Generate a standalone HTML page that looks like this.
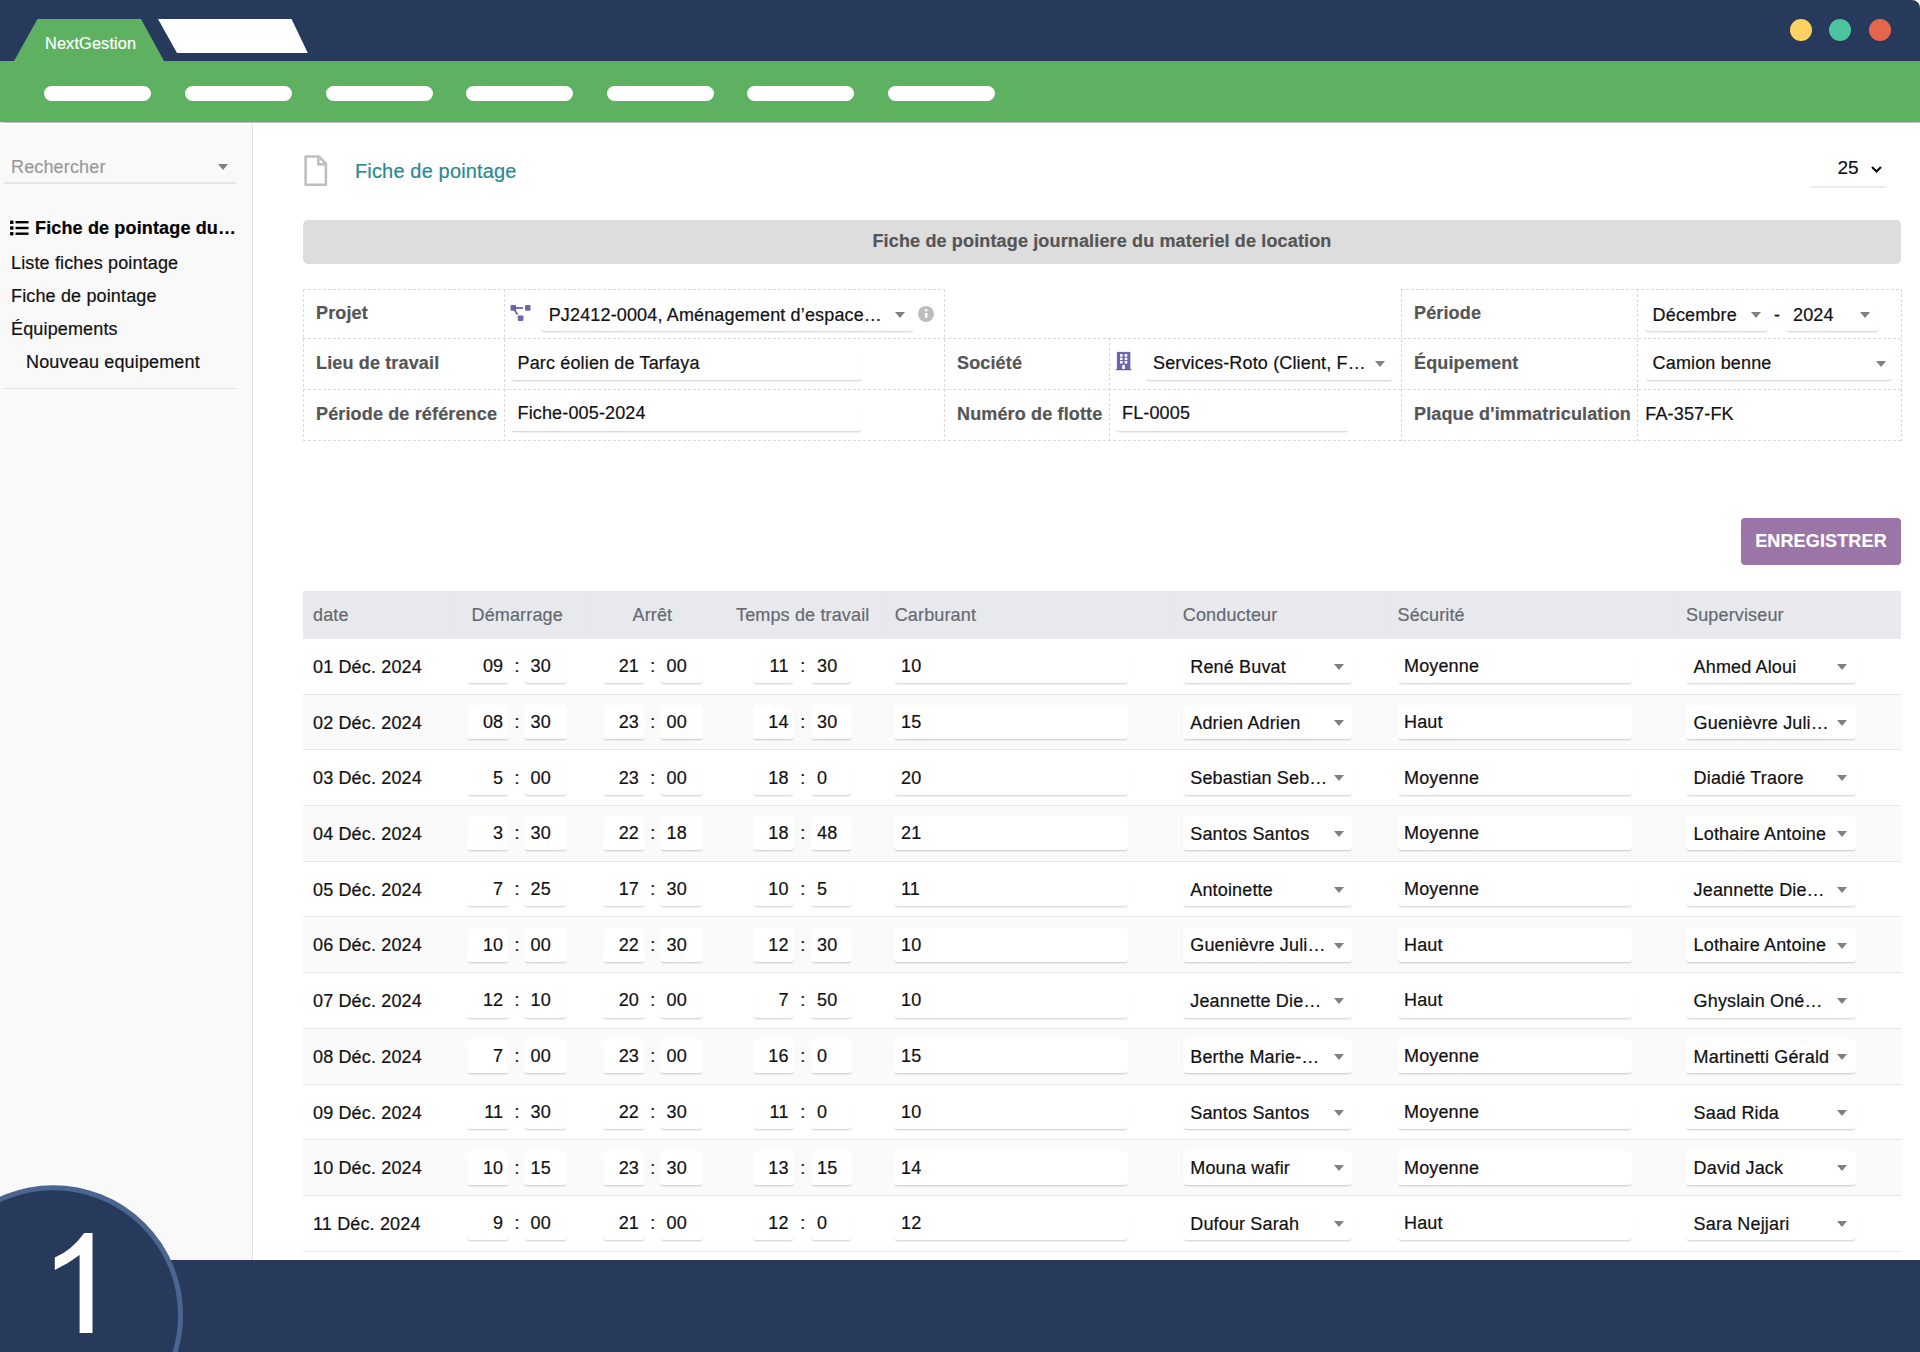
<!DOCTYPE html>
<html><head><meta charset="utf-8">
<style>
*{box-sizing:border-box;margin:0;padding:0}
html,body{width:1920px;height:1352px;overflow:hidden;background:#fff;font-family:"Liberation Sans",sans-serif;color:#111}
.abs{position:absolute}
#top{position:absolute;left:0;top:0;width:1920px;height:61px;background:#283a5b;border-top-right-radius:8px}
#green{position:absolute;left:0;top:61px;width:1920px;height:61px;background:#5eb160;box-shadow:0 0.5px 1px rgba(0,0,0,.25);z-index:2}
.pill{position:absolute;top:25px;width:107px;height:15px;border-radius:8px;background:#fff}
.dot{position:absolute;top:19px;width:22px;height:22px;border-radius:50%}
#side{position:absolute;left:0;top:124px;width:253px;height:1136px;background:#f9f9f9;border-right:1px solid #e3e3e3}
.sitem{position:absolute;left:11px;font-size:18px;white-space:nowrap;line-height:20px}
#bottom{position:absolute;left:0;top:1260px;width:1920px;height:92px;background:#283a5b}
.t{position:absolute;white-space:nowrap;line-height:20px;font-size:18px;letter-spacing:0.15px;-webkit-text-stroke:0.2px currentColor}
.tri{position:absolute;width:0;height:0;border-left:5px solid transparent;border-right:5px solid transparent;border-top:6px solid #777}
.ul{position:absolute;background:#fff;border-radius:4px;box-shadow:0 2px 2px -1.5px rgba(0,0,0,.2)}
</style></head><body>
<div id="top"></div>
<svg class="abs" style="left:0;top:0" width="400" height="61">
  <polygon points="14,61 37.5,19 141,19 164,61" fill="#5eb160"/>
  <polygon points="158,19 291.5,19 307.8,53 177,53" fill="#fff"/>
</svg>
<div class="t" style="left:45px;top:33.2px;font-size:16.3px;color:#fff">NextGestion</div>
<div class="dot" style="left:1790px;background:#fdd162"></div>
<div class="dot" style="left:1829px;background:#4cc49f"></div>
<div class="dot" style="left:1869px;background:#e4664f"></div>
<div id="green">
  <div class="pill" style="left:44px"></div>
  <div class="pill" style="left:185px"></div>
  <div class="pill" style="left:326px"></div>
  <div class="pill" style="left:466px"></div>
  <div class="pill" style="left:607px"></div>
  <div class="pill" style="left:747px"></div>
  <div class="pill" style="left:888px"></div>
</div>

<div id="side">
  <div class="t" style="left:11px;top:33px;color:#9a9a9a">Rechercher</div>
  <div class="tri" style="left:218px;top:40px;border-top-color:#808080"></div>
  <div class="abs" style="left:3px;top:58px;width:234px;height:2px;border-radius:2px;background:#e6e6e6"></div>
  <svg class="abs" style="left:10px;top:96px" width="19" height="16" viewBox="0 0 19 16">
    <rect x="0" y="0.5" width="3.5" height="3.5" rx="0.8" fill="#000"/>
    <rect x="0" y="6.2" width="3.5" height="3.5" rx="0.8" fill="#000"/>
    <rect x="0" y="11.9" width="3.5" height="3.5" rx="0.8" fill="#000"/>
    <rect x="5.5" y="1" width="13" height="2.4" fill="#000"/>
    <rect x="5.5" y="6.8" width="13" height="2.4" fill="#000"/>
    <rect x="5.5" y="12.5" width="13" height="2.4" fill="#000"/>
  </svg>
  <div class="t" style="left:35px;top:93.7px;font-weight:bold;color:#000">Fiche de pointage du…</div>
  <div class="t" style="left:11px;top:129.3px">Liste fiches pointage</div>
  <div class="t" style="left:11px;top:162px">Fiche de pointage</div>
  <div class="t" style="left:11px;top:195px">Équipements</div>
  <div class="t" style="left:26px;top:228px">Nouveau equipement</div>
  <div class="abs" style="left:3px;top:264px;width:234px;height:1px;background:#e4e4e4"></div>
</div>


<!-- page header -->
<svg class="abs" style="left:298px;top:150px" width="40" height="42" viewBox="0 0 40 42">
  <path d="M7.6 6.5 H20.9 L27.9 13.6 V34.8 H7.6 Z" fill="#fff" stroke="#bfbfbf" stroke-width="2.6" stroke-linejoin="round"/>
  <path d="M20.3 6.5 V14.4 H27.9" fill="none" stroke="#bfbfbf" stroke-width="2.6" stroke-linejoin="round"/>
</svg>
<div class="t" style="left:355px;top:159px;font-size:20px;line-height:24px;color:#2a8990">Fiche de pointage</div>
<div class="t" style="left:1837.5px;top:158px;font-size:19px;letter-spacing:0">25</div>
<svg class="abs" style="left:1869.7px;top:164.8px" width="13" height="9" viewBox="0 0 13 9"><path d="M2 2 L6.5 6.5 L11 2" fill="none" stroke="#111" stroke-width="2.2"/></svg>
<div class="abs" style="left:1809.5px;top:186px;width:77.5px;height:2px;border-radius:1px;background:#ebebeb"></div>
<div class="abs" style="left:303px;top:220px;width:1598px;height:44px;background:#dddddd;border-radius:5px"></div>
<div class="t" style="left:303px;width:1598px;text-align:center;top:231px;font-weight:bold;color:#555">Fiche de pointage journaliere du materiel de location</div>
<svg class="abs" style="left:0;top:0" width="1920" height="460"><line x1="303" y1="289.5" x2="945" y2="289.5" stroke="#dadada" stroke-width="1" stroke-dasharray="3 2"/><line x1="1401" y1="289.5" x2="1902" y2="289.5" stroke="#dadada" stroke-width="1" stroke-dasharray="3 2"/><line x1="303" y1="338.5" x2="1902" y2="338.5" stroke="#dadada" stroke-width="1" stroke-dasharray="3 2"/><line x1="303" y1="389.5" x2="1902" y2="389.5" stroke="#dadada" stroke-width="1" stroke-dasharray="3 2"/><line x1="303" y1="440.5" x2="1902" y2="440.5" stroke="#dadada" stroke-width="1" stroke-dasharray="3 2"/><line x1="303.5" y1="289" x2="303.5" y2="441" stroke="#dadada" stroke-width="1" stroke-dasharray="3 2"/><line x1="504.5" y1="289" x2="504.5" y2="441" stroke="#dadada" stroke-width="1" stroke-dasharray="3 2"/><line x1="944.5" y1="289" x2="944.5" y2="441" stroke="#dadada" stroke-width="1" stroke-dasharray="3 2"/><line x1="1401.5" y1="289" x2="1401.5" y2="441" stroke="#dadada" stroke-width="1" stroke-dasharray="3 2"/><line x1="1637.5" y1="289" x2="1637.5" y2="441" stroke="#dadada" stroke-width="1" stroke-dasharray="3 2"/><line x1="1901.5" y1="289" x2="1901.5" y2="441" stroke="#dadada" stroke-width="1" stroke-dasharray="3 2"/><line x1="1109.5" y1="338" x2="1109.5" y2="441" stroke="#dadada" stroke-width="1" stroke-dasharray="3 2"/></svg><div class="t" style="left:316px;top:303.26px;font-size:18px;line-height:20px;font-weight:bold;color:#555;">Projet</div><svg class="abs" style="left:505px;top:298px" width="35" height="30" viewBox="0 0 35 30">
<rect x="5.5" y="6.9" width="5.6" height="5.75" rx="0.8" fill="#6a67ae"/>
<rect x="20" y="6.9" width="5.5" height="5.75" rx="0.8" fill="#6a67ae"/>
<rect x="12.8" y="17.5" width="5.6" height="5.4" rx="0.8" fill="#6a67ae"/>
<line x1="10" y1="10" x2="18" y2="10" stroke="#5f5c9e" stroke-width="1.7"/>
<line x1="9.6" y1="12" x2="12.2" y2="16" stroke="#5f5c9e" stroke-width="1.6" stroke-linecap="round"/>
</svg><div class="ul" style="left:540.6px;top:297px;width:373.4px;height:34px"></div><div class="t" style="left:548.7px;top:304.76px;font-size:18px;line-height:20px;font-weight:normal;color:#111;">PJ2412-0004, Aménagement d’espace…</div><div class="tri" style="left:895px;top:312px;border-top-color:#808080"></div><svg class="abs" style="left:918px;top:306px" width="16" height="16" viewBox="0 0 16 16"><circle cx="8" cy="8" r="8" fill="#bdbdbd"/><circle cx="8.1" cy="4.2" r="1.3" fill="#fff"/><path d="M6.6 6.9 H9.5 V11.8 H6.6 V11.2 H7.1 V7.6 H6.6 Z" fill="#fff"/></svg><div class="t" style="left:1414px;top:303.26px;font-size:18px;line-height:20px;font-weight:bold;color:#555;">Période</div><div class="ul" style="left:1644.6px;top:297px;width:123.40000000000009px;height:34px"></div><div class="t" style="left:1652.6px;top:304.76px;font-size:18px;line-height:20px;font-weight:normal;color:#111;">Décembre</div><div class="tri" style="left:1751px;top:312px;border-top-color:#808080"></div><div class="t" style="left:1774px;top:304.76px;font-size:18px;line-height:20px;font-weight:normal;color:#111;">-</div><div class="ul" style="left:1786px;top:297px;width:93px;height:34px"></div><div class="t" style="left:1793px;top:304.76px;font-size:18px;line-height:20px;font-weight:normal;color:#111;">2024</div><div class="tri" style="left:1860px;top:312px;border-top-color:#808080"></div><div class="t" style="left:316px;top:353.26px;font-size:18px;line-height:20px;font-weight:bold;color:#555;">Lieu de travail</div><div class="ul" style="left:511px;top:346px;width:351px;height:34px"></div><div class="t" style="left:517.5px;top:352.76px;font-size:18px;line-height:20px;font-weight:normal;color:#111;">Parc éolien de Tarfaya</div><div class="t" style="left:957px;top:353.26px;font-size:18px;line-height:20px;font-weight:bold;color:#555;">Société</div><svg class="abs" style="left:1110px;top:345px" width="30" height="30" viewBox="0 0 30 30">
<rect x="6.9" y="6.9" width="13.5" height="17.6" fill="#6a67ae"/>
<rect x="6" y="24" width="15.3" height="1.2" fill="#5f5c9e"/>
<g fill="#fff"><rect x="10" y="9.1" width="2.6" height="2.6"/><rect x="14.6" y="9.1" width="2.7" height="2.6"/>
<rect x="10" y="12.7" width="2.6" height="2.4"/><rect x="14.6" y="12.7" width="2.7" height="2.4"/>
<rect x="10" y="16" width="2.6" height="2.6"/><rect x="14.6" y="16" width="2.7" height="2.6"/>
<path d="M12.2 24 V21 A1.35 1.35 0 0 1 14.9 21 V24 Z"/></g>
</svg><div class="ul" style="left:1146px;top:346px;width:247px;height:34px"></div><div class="t" style="left:1153px;top:353.26px;font-size:18px;line-height:20px;font-weight:normal;color:#111;">Services-Roto (Client, F…</div><div class="tri" style="left:1375px;top:361px;border-top-color:#808080"></div><div class="t" style="left:1414px;top:353.26px;font-size:18px;line-height:20px;font-weight:bold;color:#555;">Équipement</div><div class="ul" style="left:1644.6px;top:346px;width:247.9000000000001px;height:34px"></div><div class="t" style="left:1652.6px;top:353.06px;font-size:18px;line-height:20px;font-weight:normal;color:#111;">Camion benne</div><div class="tri" style="left:1876px;top:361px;border-top-color:#808080"></div><div class="t" style="left:316px;top:404.26px;font-size:18px;line-height:20px;font-weight:bold;color:#555;">Période de référence</div><div class="ul" style="left:511px;top:396.6px;width:351px;height:34px"></div><div class="t" style="left:517.5px;top:402.56px;font-size:18px;line-height:20px;font-weight:normal;color:#111;">Fiche-005-2024</div><div class="t" style="left:957px;top:404.26px;font-size:18px;line-height:20px;font-weight:bold;color:#555;">Numéro de flotte</div><div class="ul" style="left:1116px;top:396.6px;width:233px;height:34px"></div><div class="t" style="left:1122px;top:402.56px;font-size:18px;line-height:20px;font-weight:normal;color:#111;">FL-0005</div><div class="t" style="left:1414px;top:404.26px;font-size:18px;line-height:20px;font-weight:bold;color:#555;">Plaque d'immatriculation</div><div class="t" style="left:1645.3px;top:404.46px;font-size:18px;line-height:20px;font-weight:normal;color:#111;">FA-357-FK</div><div class="abs" style="left:1741px;top:518px;width:160px;height:47px;border-radius:4px;background:#9b74a8"></div><div class="t" style="left:1741px;top:531.26px;font-size:18px;line-height:20px;font-weight:bold;color:#fff;width:160px;text-align:center;">ENREGISTRER</div><div class="abs" style="left:303px;top:591px;width:1598px;height:48px;background:#e8e9ec"></div><div class="abs" style="left:450px;top:591px;width:1px;height:48px;background:#e4e5e8"></div><div class="abs" style="left:585px;top:591px;width:1px;height:48px;background:#e4e5e8"></div><div class="abs" style="left:883px;top:591px;width:1px;height:48px;background:#e4e5e8"></div><div class="abs" style="left:1173px;top:591px;width:1px;height:48px;background:#e4e5e8"></div><div class="abs" style="left:1387px;top:591px;width:1px;height:48px;background:#e4e5e8"></div><div class="abs" style="left:1675px;top:591px;width:1px;height:48px;background:#e4e5e8"></div><div class="t" style="left:313px;top:604.76px;font-size:18px;line-height:20px;font-weight:normal;color:#666a72;">date</div><div class="t" style="left:471.5px;top:604.76px;font-size:18px;line-height:20px;font-weight:normal;color:#666a72;">Démarrage</div><div class="t" style="left:632.5px;top:604.76px;font-size:18px;line-height:20px;font-weight:normal;color:#666a72;">Arrêt</div><div class="t" style="left:736px;top:604.76px;font-size:18px;line-height:20px;font-weight:normal;color:#666a72;">Temps de travail</div><div class="t" style="left:894.7px;top:604.76px;font-size:18px;line-height:20px;font-weight:normal;color:#666a72;">Carburant</div><div class="t" style="left:1182.8px;top:604.76px;font-size:18px;line-height:20px;font-weight:normal;color:#666a72;">Conducteur</div><div class="t" style="left:1397.5px;top:604.76px;font-size:18px;line-height:20px;font-weight:normal;color:#666a72;">Sécurité</div><div class="t" style="left:1686px;top:604.76px;font-size:18px;line-height:20px;font-weight:normal;color:#666a72;">Superviseur</div><div class="abs" style="left:303px;top:639.00px;width:1598px;height:55.70px;background:#fff;border-bottom:1px solid #e6e6e6"></div><div class="t" style="left:313px;top:656.96px;font-size:18px;line-height:20px;font-weight:normal;color:#111;">01 Déc. 2024</div><div class="ul" style="left:466.7px;top:649.3px;width:42.400000000000034px;height:34px"></div><div class="ul" style="left:524px;top:649.3px;width:43.200000000000045px;height:34px"></div><div class="t" style="left:466.7px;width:36.6px;text-align:right;top:656.26px">09</div><div class="t" style="left:530.6px;top:656.26px;font-size:18px;line-height:20px;font-weight:normal;color:#111;">30</div><div class="t" style="left:514.6px;top:656.26px;font-size:18px;line-height:20px;font-weight:normal;color:#111;">:</div><div class="ul" style="left:603.4px;top:649.3px;width:41.39999999999998px;height:34px"></div><div class="ul" style="left:660px;top:649.3px;width:42.700000000000045px;height:34px"></div><div class="t" style="left:603.4px;width:35.6px;text-align:right;top:656.26px">21</div><div class="t" style="left:666.6px;top:656.26px;font-size:18px;line-height:20px;font-weight:normal;color:#111;">00</div><div class="t" style="left:650.3px;top:656.26px;font-size:18px;line-height:20px;font-weight:normal;color:#111;">:</div><div class="ul" style="left:752.7px;top:649.3px;width:41.69999999999993px;height:34px"></div><div class="ul" style="left:810.5px;top:649.3px;width:41.700000000000045px;height:34px"></div><div class="t" style="left:752.7px;width:35.9px;text-align:right;top:656.26px">11</div><div class="t" style="left:817.1px;top:656.26px;font-size:18px;line-height:20px;font-weight:normal;color:#111;">30</div><div class="t" style="left:800.3px;top:656.26px;font-size:18px;line-height:20px;font-weight:normal;color:#111;">:</div><div class="ul" style="left:894.2px;top:649.3px;width:233.5999999999999px;height:34px"></div><div class="t" style="left:901px;top:656.26px;font-size:18px;line-height:20px;font-weight:normal;color:#111;">10</div><div class="ul" style="left:1182.8px;top:649.3px;width:169.5px;height:34px"></div><div class="t" style="left:1190.3px;top:656.96px;font-size:18px;line-height:20px;font-weight:normal;color:#111;">René Buvat</div><div class="tri" style="left:1334px;top:664.0px;border-top-color:#808080"></div><div class="ul" style="left:1398px;top:649.3px;width:233.5px;height:34px"></div><div class="t" style="left:1404px;top:656.26px;font-size:18px;line-height:20px;font-weight:normal;color:#111;">Moyenne</div><div class="ul" style="left:1686.4px;top:649.3px;width:169.5px;height:34px"></div><div class="t" style="left:1693.6px;top:656.96px;font-size:18px;line-height:20px;font-weight:normal;color:#111;">Ahmed Aloui</div><div class="tri" style="left:1837px;top:664.0px;border-top-color:#808080"></div><div class="abs" style="left:303px;top:694.70px;width:1598px;height:55.70px;background:#fafafa;border-bottom:1px solid #e6e6e6"></div><div class="t" style="left:313px;top:712.66px;font-size:18px;line-height:20px;font-weight:normal;color:#111;">02 Déc. 2024</div><div class="ul" style="left:466.7px;top:705.0px;width:42.400000000000034px;height:34px"></div><div class="ul" style="left:524px;top:705.0px;width:43.200000000000045px;height:34px"></div><div class="t" style="left:466.7px;width:36.6px;text-align:right;top:711.96px">08</div><div class="t" style="left:530.6px;top:711.96px;font-size:18px;line-height:20px;font-weight:normal;color:#111;">30</div><div class="t" style="left:514.6px;top:711.96px;font-size:18px;line-height:20px;font-weight:normal;color:#111;">:</div><div class="ul" style="left:603.4px;top:705.0px;width:41.39999999999998px;height:34px"></div><div class="ul" style="left:660px;top:705.0px;width:42.700000000000045px;height:34px"></div><div class="t" style="left:603.4px;width:35.6px;text-align:right;top:711.96px">23</div><div class="t" style="left:666.6px;top:711.96px;font-size:18px;line-height:20px;font-weight:normal;color:#111;">00</div><div class="t" style="left:650.3px;top:711.96px;font-size:18px;line-height:20px;font-weight:normal;color:#111;">:</div><div class="ul" style="left:752.7px;top:705.0px;width:41.69999999999993px;height:34px"></div><div class="ul" style="left:810.5px;top:705.0px;width:41.700000000000045px;height:34px"></div><div class="t" style="left:752.7px;width:35.9px;text-align:right;top:711.96px">14</div><div class="t" style="left:817.1px;top:711.96px;font-size:18px;line-height:20px;font-weight:normal;color:#111;">30</div><div class="t" style="left:800.3px;top:711.96px;font-size:18px;line-height:20px;font-weight:normal;color:#111;">:</div><div class="ul" style="left:894.2px;top:705.0px;width:233.5999999999999px;height:34px"></div><div class="t" style="left:901px;top:711.96px;font-size:18px;line-height:20px;font-weight:normal;color:#111;">15</div><div class="ul" style="left:1182.8px;top:705.0px;width:169.5px;height:34px"></div><div class="t" style="left:1190.3px;top:712.66px;font-size:18px;line-height:20px;font-weight:normal;color:#111;">Adrien Adrien</div><div class="tri" style="left:1334px;top:719.7px;border-top-color:#808080"></div><div class="ul" style="left:1398px;top:705.0px;width:233.5px;height:34px"></div><div class="t" style="left:1404px;top:711.96px;font-size:18px;line-height:20px;font-weight:normal;color:#111;">Haut</div><div class="ul" style="left:1686.4px;top:705.0px;width:169.5px;height:34px"></div><div class="t" style="left:1693.6px;top:712.66px;font-size:18px;line-height:20px;font-weight:normal;color:#111;">Guenièvre Juli…</div><div class="tri" style="left:1837px;top:719.7px;border-top-color:#808080"></div><div class="abs" style="left:303px;top:750.40px;width:1598px;height:55.70px;background:#fff;border-bottom:1px solid #e6e6e6"></div><div class="t" style="left:313px;top:768.36px;font-size:18px;line-height:20px;font-weight:normal;color:#111;">03 Déc. 2024</div><div class="ul" style="left:466.7px;top:760.6999999999999px;width:42.400000000000034px;height:34px"></div><div class="ul" style="left:524px;top:760.6999999999999px;width:43.200000000000045px;height:34px"></div><div class="t" style="left:466.7px;width:36.6px;text-align:right;top:767.66px">5</div><div class="t" style="left:530.6px;top:767.66px;font-size:18px;line-height:20px;font-weight:normal;color:#111;">00</div><div class="t" style="left:514.6px;top:767.66px;font-size:18px;line-height:20px;font-weight:normal;color:#111;">:</div><div class="ul" style="left:603.4px;top:760.6999999999999px;width:41.39999999999998px;height:34px"></div><div class="ul" style="left:660px;top:760.6999999999999px;width:42.700000000000045px;height:34px"></div><div class="t" style="left:603.4px;width:35.6px;text-align:right;top:767.66px">23</div><div class="t" style="left:666.6px;top:767.66px;font-size:18px;line-height:20px;font-weight:normal;color:#111;">00</div><div class="t" style="left:650.3px;top:767.66px;font-size:18px;line-height:20px;font-weight:normal;color:#111;">:</div><div class="ul" style="left:752.7px;top:760.6999999999999px;width:41.69999999999993px;height:34px"></div><div class="ul" style="left:810.5px;top:760.6999999999999px;width:41.700000000000045px;height:34px"></div><div class="t" style="left:752.7px;width:35.9px;text-align:right;top:767.66px">18</div><div class="t" style="left:817.1px;top:767.66px;font-size:18px;line-height:20px;font-weight:normal;color:#111;">0</div><div class="t" style="left:800.3px;top:767.66px;font-size:18px;line-height:20px;font-weight:normal;color:#111;">:</div><div class="ul" style="left:894.2px;top:760.6999999999999px;width:233.5999999999999px;height:34px"></div><div class="t" style="left:901px;top:767.66px;font-size:18px;line-height:20px;font-weight:normal;color:#111;">20</div><div class="ul" style="left:1182.8px;top:760.6999999999999px;width:169.5px;height:34px"></div><div class="t" style="left:1190.3px;top:768.36px;font-size:18px;line-height:20px;font-weight:normal;color:#111;">Sebastian Seb…</div><div class="tri" style="left:1334px;top:775.4px;border-top-color:#808080"></div><div class="ul" style="left:1398px;top:760.6999999999999px;width:233.5px;height:34px"></div><div class="t" style="left:1404px;top:767.66px;font-size:18px;line-height:20px;font-weight:normal;color:#111;">Moyenne</div><div class="ul" style="left:1686.4px;top:760.6999999999999px;width:169.5px;height:34px"></div><div class="t" style="left:1693.6px;top:768.36px;font-size:18px;line-height:20px;font-weight:normal;color:#111;">Diadié Traore</div><div class="tri" style="left:1837px;top:775.4px;border-top-color:#808080"></div><div class="abs" style="left:303px;top:806.10px;width:1598px;height:55.70px;background:#fafafa;border-bottom:1px solid #e6e6e6"></div><div class="t" style="left:313px;top:824.06px;font-size:18px;line-height:20px;font-weight:normal;color:#111;">04 Déc. 2024</div><div class="ul" style="left:466.7px;top:816.4px;width:42.400000000000034px;height:34px"></div><div class="ul" style="left:524px;top:816.4px;width:43.200000000000045px;height:34px"></div><div class="t" style="left:466.7px;width:36.6px;text-align:right;top:823.36px">3</div><div class="t" style="left:530.6px;top:823.36px;font-size:18px;line-height:20px;font-weight:normal;color:#111;">30</div><div class="t" style="left:514.6px;top:823.36px;font-size:18px;line-height:20px;font-weight:normal;color:#111;">:</div><div class="ul" style="left:603.4px;top:816.4px;width:41.39999999999998px;height:34px"></div><div class="ul" style="left:660px;top:816.4px;width:42.700000000000045px;height:34px"></div><div class="t" style="left:603.4px;width:35.6px;text-align:right;top:823.36px">22</div><div class="t" style="left:666.6px;top:823.36px;font-size:18px;line-height:20px;font-weight:normal;color:#111;">18</div><div class="t" style="left:650.3px;top:823.36px;font-size:18px;line-height:20px;font-weight:normal;color:#111;">:</div><div class="ul" style="left:752.7px;top:816.4px;width:41.69999999999993px;height:34px"></div><div class="ul" style="left:810.5px;top:816.4px;width:41.700000000000045px;height:34px"></div><div class="t" style="left:752.7px;width:35.9px;text-align:right;top:823.36px">18</div><div class="t" style="left:817.1px;top:823.36px;font-size:18px;line-height:20px;font-weight:normal;color:#111;">48</div><div class="t" style="left:800.3px;top:823.36px;font-size:18px;line-height:20px;font-weight:normal;color:#111;">:</div><div class="ul" style="left:894.2px;top:816.4px;width:233.5999999999999px;height:34px"></div><div class="t" style="left:901px;top:823.36px;font-size:18px;line-height:20px;font-weight:normal;color:#111;">21</div><div class="ul" style="left:1182.8px;top:816.4px;width:169.5px;height:34px"></div><div class="t" style="left:1190.3px;top:824.06px;font-size:18px;line-height:20px;font-weight:normal;color:#111;">Santos Santos</div><div class="tri" style="left:1334px;top:831.1px;border-top-color:#808080"></div><div class="ul" style="left:1398px;top:816.4px;width:233.5px;height:34px"></div><div class="t" style="left:1404px;top:823.36px;font-size:18px;line-height:20px;font-weight:normal;color:#111;">Moyenne</div><div class="ul" style="left:1686.4px;top:816.4px;width:169.5px;height:34px"></div><div class="t" style="left:1693.6px;top:824.06px;font-size:18px;line-height:20px;font-weight:normal;color:#111;">Lothaire Antoine</div><div class="tri" style="left:1837px;top:831.1px;border-top-color:#808080"></div><div class="abs" style="left:303px;top:861.80px;width:1598px;height:55.70px;background:#fff;border-bottom:1px solid #e6e6e6"></div><div class="t" style="left:313px;top:879.76px;font-size:18px;line-height:20px;font-weight:normal;color:#111;">05 Déc. 2024</div><div class="ul" style="left:466.7px;top:872.0999999999999px;width:42.400000000000034px;height:34px"></div><div class="ul" style="left:524px;top:872.0999999999999px;width:43.200000000000045px;height:34px"></div><div class="t" style="left:466.7px;width:36.6px;text-align:right;top:879.06px">7</div><div class="t" style="left:530.6px;top:879.06px;font-size:18px;line-height:20px;font-weight:normal;color:#111;">25</div><div class="t" style="left:514.6px;top:879.06px;font-size:18px;line-height:20px;font-weight:normal;color:#111;">:</div><div class="ul" style="left:603.4px;top:872.0999999999999px;width:41.39999999999998px;height:34px"></div><div class="ul" style="left:660px;top:872.0999999999999px;width:42.700000000000045px;height:34px"></div><div class="t" style="left:603.4px;width:35.6px;text-align:right;top:879.06px">17</div><div class="t" style="left:666.6px;top:879.06px;font-size:18px;line-height:20px;font-weight:normal;color:#111;">30</div><div class="t" style="left:650.3px;top:879.06px;font-size:18px;line-height:20px;font-weight:normal;color:#111;">:</div><div class="ul" style="left:752.7px;top:872.0999999999999px;width:41.69999999999993px;height:34px"></div><div class="ul" style="left:810.5px;top:872.0999999999999px;width:41.700000000000045px;height:34px"></div><div class="t" style="left:752.7px;width:35.9px;text-align:right;top:879.06px">10</div><div class="t" style="left:817.1px;top:879.06px;font-size:18px;line-height:20px;font-weight:normal;color:#111;">5</div><div class="t" style="left:800.3px;top:879.06px;font-size:18px;line-height:20px;font-weight:normal;color:#111;">:</div><div class="ul" style="left:894.2px;top:872.0999999999999px;width:233.5999999999999px;height:34px"></div><div class="t" style="left:901px;top:879.06px;font-size:18px;line-height:20px;font-weight:normal;color:#111;">11</div><div class="ul" style="left:1182.8px;top:872.0999999999999px;width:169.5px;height:34px"></div><div class="t" style="left:1190.3px;top:879.76px;font-size:18px;line-height:20px;font-weight:normal;color:#111;">Antoinette</div><div class="tri" style="left:1334px;top:886.8px;border-top-color:#808080"></div><div class="ul" style="left:1398px;top:872.0999999999999px;width:233.5px;height:34px"></div><div class="t" style="left:1404px;top:879.06px;font-size:18px;line-height:20px;font-weight:normal;color:#111;">Moyenne</div><div class="ul" style="left:1686.4px;top:872.0999999999999px;width:169.5px;height:34px"></div><div class="t" style="left:1693.6px;top:879.76px;font-size:18px;line-height:20px;font-weight:normal;color:#111;">Jeannette Die…</div><div class="tri" style="left:1837px;top:886.8px;border-top-color:#808080"></div><div class="abs" style="left:303px;top:917.50px;width:1598px;height:55.70px;background:#fafafa;border-bottom:1px solid #e6e6e6"></div><div class="t" style="left:313px;top:935.46px;font-size:18px;line-height:20px;font-weight:normal;color:#111;">06 Déc. 2024</div><div class="ul" style="left:466.7px;top:927.8px;width:42.400000000000034px;height:34px"></div><div class="ul" style="left:524px;top:927.8px;width:43.200000000000045px;height:34px"></div><div class="t" style="left:466.7px;width:36.6px;text-align:right;top:934.76px">10</div><div class="t" style="left:530.6px;top:934.76px;font-size:18px;line-height:20px;font-weight:normal;color:#111;">00</div><div class="t" style="left:514.6px;top:934.76px;font-size:18px;line-height:20px;font-weight:normal;color:#111;">:</div><div class="ul" style="left:603.4px;top:927.8px;width:41.39999999999998px;height:34px"></div><div class="ul" style="left:660px;top:927.8px;width:42.700000000000045px;height:34px"></div><div class="t" style="left:603.4px;width:35.6px;text-align:right;top:934.76px">22</div><div class="t" style="left:666.6px;top:934.76px;font-size:18px;line-height:20px;font-weight:normal;color:#111;">30</div><div class="t" style="left:650.3px;top:934.76px;font-size:18px;line-height:20px;font-weight:normal;color:#111;">:</div><div class="ul" style="left:752.7px;top:927.8px;width:41.69999999999993px;height:34px"></div><div class="ul" style="left:810.5px;top:927.8px;width:41.700000000000045px;height:34px"></div><div class="t" style="left:752.7px;width:35.9px;text-align:right;top:934.76px">12</div><div class="t" style="left:817.1px;top:934.76px;font-size:18px;line-height:20px;font-weight:normal;color:#111;">30</div><div class="t" style="left:800.3px;top:934.76px;font-size:18px;line-height:20px;font-weight:normal;color:#111;">:</div><div class="ul" style="left:894.2px;top:927.8px;width:233.5999999999999px;height:34px"></div><div class="t" style="left:901px;top:934.76px;font-size:18px;line-height:20px;font-weight:normal;color:#111;">10</div><div class="ul" style="left:1182.8px;top:927.8px;width:169.5px;height:34px"></div><div class="t" style="left:1190.3px;top:935.46px;font-size:18px;line-height:20px;font-weight:normal;color:#111;">Guenièvre Juli…</div><div class="tri" style="left:1334px;top:942.5px;border-top-color:#808080"></div><div class="ul" style="left:1398px;top:927.8px;width:233.5px;height:34px"></div><div class="t" style="left:1404px;top:934.76px;font-size:18px;line-height:20px;font-weight:normal;color:#111;">Haut</div><div class="ul" style="left:1686.4px;top:927.8px;width:169.5px;height:34px"></div><div class="t" style="left:1693.6px;top:935.46px;font-size:18px;line-height:20px;font-weight:normal;color:#111;">Lothaire Antoine</div><div class="tri" style="left:1837px;top:942.5px;border-top-color:#808080"></div><div class="abs" style="left:303px;top:973.20px;width:1598px;height:55.70px;background:#fff;border-bottom:1px solid #e6e6e6"></div><div class="t" style="left:313px;top:991.16px;font-size:18px;line-height:20px;font-weight:normal;color:#111;">07 Déc. 2024</div><div class="ul" style="left:466.7px;top:983.5px;width:42.400000000000034px;height:34px"></div><div class="ul" style="left:524px;top:983.5px;width:43.200000000000045px;height:34px"></div><div class="t" style="left:466.7px;width:36.6px;text-align:right;top:990.46px">12</div><div class="t" style="left:530.6px;top:990.46px;font-size:18px;line-height:20px;font-weight:normal;color:#111;">10</div><div class="t" style="left:514.6px;top:990.46px;font-size:18px;line-height:20px;font-weight:normal;color:#111;">:</div><div class="ul" style="left:603.4px;top:983.5px;width:41.39999999999998px;height:34px"></div><div class="ul" style="left:660px;top:983.5px;width:42.700000000000045px;height:34px"></div><div class="t" style="left:603.4px;width:35.6px;text-align:right;top:990.46px">20</div><div class="t" style="left:666.6px;top:990.46px;font-size:18px;line-height:20px;font-weight:normal;color:#111;">00</div><div class="t" style="left:650.3px;top:990.46px;font-size:18px;line-height:20px;font-weight:normal;color:#111;">:</div><div class="ul" style="left:752.7px;top:983.5px;width:41.69999999999993px;height:34px"></div><div class="ul" style="left:810.5px;top:983.5px;width:41.700000000000045px;height:34px"></div><div class="t" style="left:752.7px;width:35.9px;text-align:right;top:990.46px">7</div><div class="t" style="left:817.1px;top:990.46px;font-size:18px;line-height:20px;font-weight:normal;color:#111;">50</div><div class="t" style="left:800.3px;top:990.46px;font-size:18px;line-height:20px;font-weight:normal;color:#111;">:</div><div class="ul" style="left:894.2px;top:983.5px;width:233.5999999999999px;height:34px"></div><div class="t" style="left:901px;top:990.46px;font-size:18px;line-height:20px;font-weight:normal;color:#111;">10</div><div class="ul" style="left:1182.8px;top:983.5px;width:169.5px;height:34px"></div><div class="t" style="left:1190.3px;top:991.16px;font-size:18px;line-height:20px;font-weight:normal;color:#111;">Jeannette Die…</div><div class="tri" style="left:1334px;top:998.2px;border-top-color:#808080"></div><div class="ul" style="left:1398px;top:983.5px;width:233.5px;height:34px"></div><div class="t" style="left:1404px;top:990.46px;font-size:18px;line-height:20px;font-weight:normal;color:#111;">Haut</div><div class="ul" style="left:1686.4px;top:983.5px;width:169.5px;height:34px"></div><div class="t" style="left:1693.6px;top:991.16px;font-size:18px;line-height:20px;font-weight:normal;color:#111;">Ghyslain Oné…</div><div class="tri" style="left:1837px;top:998.2px;border-top-color:#808080"></div><div class="abs" style="left:303px;top:1028.90px;width:1598px;height:55.70px;background:#fafafa;border-bottom:1px solid #e6e6e6"></div><div class="t" style="left:313px;top:1046.86px;font-size:18px;line-height:20px;font-weight:normal;color:#111;">08 Déc. 2024</div><div class="ul" style="left:466.7px;top:1039.2px;width:42.400000000000034px;height:34px"></div><div class="ul" style="left:524px;top:1039.2px;width:43.200000000000045px;height:34px"></div><div class="t" style="left:466.7px;width:36.6px;text-align:right;top:1046.16px">7</div><div class="t" style="left:530.6px;top:1046.16px;font-size:18px;line-height:20px;font-weight:normal;color:#111;">00</div><div class="t" style="left:514.6px;top:1046.16px;font-size:18px;line-height:20px;font-weight:normal;color:#111;">:</div><div class="ul" style="left:603.4px;top:1039.2px;width:41.39999999999998px;height:34px"></div><div class="ul" style="left:660px;top:1039.2px;width:42.700000000000045px;height:34px"></div><div class="t" style="left:603.4px;width:35.6px;text-align:right;top:1046.16px">23</div><div class="t" style="left:666.6px;top:1046.16px;font-size:18px;line-height:20px;font-weight:normal;color:#111;">00</div><div class="t" style="left:650.3px;top:1046.16px;font-size:18px;line-height:20px;font-weight:normal;color:#111;">:</div><div class="ul" style="left:752.7px;top:1039.2px;width:41.69999999999993px;height:34px"></div><div class="ul" style="left:810.5px;top:1039.2px;width:41.700000000000045px;height:34px"></div><div class="t" style="left:752.7px;width:35.9px;text-align:right;top:1046.16px">16</div><div class="t" style="left:817.1px;top:1046.16px;font-size:18px;line-height:20px;font-weight:normal;color:#111;">0</div><div class="t" style="left:800.3px;top:1046.16px;font-size:18px;line-height:20px;font-weight:normal;color:#111;">:</div><div class="ul" style="left:894.2px;top:1039.2px;width:233.5999999999999px;height:34px"></div><div class="t" style="left:901px;top:1046.16px;font-size:18px;line-height:20px;font-weight:normal;color:#111;">15</div><div class="ul" style="left:1182.8px;top:1039.2px;width:169.5px;height:34px"></div><div class="t" style="left:1190.3px;top:1046.86px;font-size:18px;line-height:20px;font-weight:normal;color:#111;">Berthe Marie-…</div><div class="tri" style="left:1334px;top:1053.9px;border-top-color:#808080"></div><div class="ul" style="left:1398px;top:1039.2px;width:233.5px;height:34px"></div><div class="t" style="left:1404px;top:1046.16px;font-size:18px;line-height:20px;font-weight:normal;color:#111;">Moyenne</div><div class="ul" style="left:1686.4px;top:1039.2px;width:169.5px;height:34px"></div><div class="t" style="left:1693.6px;top:1046.86px;font-size:18px;line-height:20px;font-weight:normal;color:#111;">Martinetti Gérald</div><div class="tri" style="left:1837px;top:1053.9px;border-top-color:#808080"></div><div class="abs" style="left:303px;top:1084.60px;width:1598px;height:55.70px;background:#fff;border-bottom:1px solid #e6e6e6"></div><div class="t" style="left:313px;top:1102.56px;font-size:18px;line-height:20px;font-weight:normal;color:#111;">09 Déc. 2024</div><div class="ul" style="left:466.7px;top:1094.8999999999999px;width:42.400000000000034px;height:34px"></div><div class="ul" style="left:524px;top:1094.8999999999999px;width:43.200000000000045px;height:34px"></div><div class="t" style="left:466.7px;width:36.6px;text-align:right;top:1101.86px">11</div><div class="t" style="left:530.6px;top:1101.86px;font-size:18px;line-height:20px;font-weight:normal;color:#111;">30</div><div class="t" style="left:514.6px;top:1101.86px;font-size:18px;line-height:20px;font-weight:normal;color:#111;">:</div><div class="ul" style="left:603.4px;top:1094.8999999999999px;width:41.39999999999998px;height:34px"></div><div class="ul" style="left:660px;top:1094.8999999999999px;width:42.700000000000045px;height:34px"></div><div class="t" style="left:603.4px;width:35.6px;text-align:right;top:1101.86px">22</div><div class="t" style="left:666.6px;top:1101.86px;font-size:18px;line-height:20px;font-weight:normal;color:#111;">30</div><div class="t" style="left:650.3px;top:1101.86px;font-size:18px;line-height:20px;font-weight:normal;color:#111;">:</div><div class="ul" style="left:752.7px;top:1094.8999999999999px;width:41.69999999999993px;height:34px"></div><div class="ul" style="left:810.5px;top:1094.8999999999999px;width:41.700000000000045px;height:34px"></div><div class="t" style="left:752.7px;width:35.9px;text-align:right;top:1101.86px">11</div><div class="t" style="left:817.1px;top:1101.86px;font-size:18px;line-height:20px;font-weight:normal;color:#111;">0</div><div class="t" style="left:800.3px;top:1101.86px;font-size:18px;line-height:20px;font-weight:normal;color:#111;">:</div><div class="ul" style="left:894.2px;top:1094.8999999999999px;width:233.5999999999999px;height:34px"></div><div class="t" style="left:901px;top:1101.86px;font-size:18px;line-height:20px;font-weight:normal;color:#111;">10</div><div class="ul" style="left:1182.8px;top:1094.8999999999999px;width:169.5px;height:34px"></div><div class="t" style="left:1190.3px;top:1102.56px;font-size:18px;line-height:20px;font-weight:normal;color:#111;">Santos Santos</div><div class="tri" style="left:1334px;top:1109.6px;border-top-color:#808080"></div><div class="ul" style="left:1398px;top:1094.8999999999999px;width:233.5px;height:34px"></div><div class="t" style="left:1404px;top:1101.86px;font-size:18px;line-height:20px;font-weight:normal;color:#111;">Moyenne</div><div class="ul" style="left:1686.4px;top:1094.8999999999999px;width:169.5px;height:34px"></div><div class="t" style="left:1693.6px;top:1102.56px;font-size:18px;line-height:20px;font-weight:normal;color:#111;">Saad Rida</div><div class="tri" style="left:1837px;top:1109.6px;border-top-color:#808080"></div><div class="abs" style="left:303px;top:1140.30px;width:1598px;height:55.70px;background:#fafafa;border-bottom:1px solid #e6e6e6"></div><div class="t" style="left:313px;top:1158.26px;font-size:18px;line-height:20px;font-weight:normal;color:#111;">10 Déc. 2024</div><div class="ul" style="left:466.7px;top:1150.6px;width:42.400000000000034px;height:34px"></div><div class="ul" style="left:524px;top:1150.6px;width:43.200000000000045px;height:34px"></div><div class="t" style="left:466.7px;width:36.6px;text-align:right;top:1157.56px">10</div><div class="t" style="left:530.6px;top:1157.56px;font-size:18px;line-height:20px;font-weight:normal;color:#111;">15</div><div class="t" style="left:514.6px;top:1157.56px;font-size:18px;line-height:20px;font-weight:normal;color:#111;">:</div><div class="ul" style="left:603.4px;top:1150.6px;width:41.39999999999998px;height:34px"></div><div class="ul" style="left:660px;top:1150.6px;width:42.700000000000045px;height:34px"></div><div class="t" style="left:603.4px;width:35.6px;text-align:right;top:1157.56px">23</div><div class="t" style="left:666.6px;top:1157.56px;font-size:18px;line-height:20px;font-weight:normal;color:#111;">30</div><div class="t" style="left:650.3px;top:1157.56px;font-size:18px;line-height:20px;font-weight:normal;color:#111;">:</div><div class="ul" style="left:752.7px;top:1150.6px;width:41.69999999999993px;height:34px"></div><div class="ul" style="left:810.5px;top:1150.6px;width:41.700000000000045px;height:34px"></div><div class="t" style="left:752.7px;width:35.9px;text-align:right;top:1157.56px">13</div><div class="t" style="left:817.1px;top:1157.56px;font-size:18px;line-height:20px;font-weight:normal;color:#111;">15</div><div class="t" style="left:800.3px;top:1157.56px;font-size:18px;line-height:20px;font-weight:normal;color:#111;">:</div><div class="ul" style="left:894.2px;top:1150.6px;width:233.5999999999999px;height:34px"></div><div class="t" style="left:901px;top:1157.56px;font-size:18px;line-height:20px;font-weight:normal;color:#111;">14</div><div class="ul" style="left:1182.8px;top:1150.6px;width:169.5px;height:34px"></div><div class="t" style="left:1190.3px;top:1158.26px;font-size:18px;line-height:20px;font-weight:normal;color:#111;">Mouna wafir</div><div class="tri" style="left:1334px;top:1165.3px;border-top-color:#808080"></div><div class="ul" style="left:1398px;top:1150.6px;width:233.5px;height:34px"></div><div class="t" style="left:1404px;top:1157.56px;font-size:18px;line-height:20px;font-weight:normal;color:#111;">Moyenne</div><div class="ul" style="left:1686.4px;top:1150.6px;width:169.5px;height:34px"></div><div class="t" style="left:1693.6px;top:1158.26px;font-size:18px;line-height:20px;font-weight:normal;color:#111;">David Jack</div><div class="tri" style="left:1837px;top:1165.3px;border-top-color:#808080"></div><div class="abs" style="left:303px;top:1196.00px;width:1598px;height:55.70px;background:#fff;border-bottom:1px solid #e6e6e6"></div><div class="t" style="left:313px;top:1213.96px;font-size:18px;line-height:20px;font-weight:normal;color:#111;">11 Déc. 2024</div><div class="ul" style="left:466.7px;top:1206.3px;width:42.400000000000034px;height:34px"></div><div class="ul" style="left:524px;top:1206.3px;width:43.200000000000045px;height:34px"></div><div class="t" style="left:466.7px;width:36.6px;text-align:right;top:1213.26px">9</div><div class="t" style="left:530.6px;top:1213.26px;font-size:18px;line-height:20px;font-weight:normal;color:#111;">00</div><div class="t" style="left:514.6px;top:1213.26px;font-size:18px;line-height:20px;font-weight:normal;color:#111;">:</div><div class="ul" style="left:603.4px;top:1206.3px;width:41.39999999999998px;height:34px"></div><div class="ul" style="left:660px;top:1206.3px;width:42.700000000000045px;height:34px"></div><div class="t" style="left:603.4px;width:35.6px;text-align:right;top:1213.26px">21</div><div class="t" style="left:666.6px;top:1213.26px;font-size:18px;line-height:20px;font-weight:normal;color:#111;">00</div><div class="t" style="left:650.3px;top:1213.26px;font-size:18px;line-height:20px;font-weight:normal;color:#111;">:</div><div class="ul" style="left:752.7px;top:1206.3px;width:41.69999999999993px;height:34px"></div><div class="ul" style="left:810.5px;top:1206.3px;width:41.700000000000045px;height:34px"></div><div class="t" style="left:752.7px;width:35.9px;text-align:right;top:1213.26px">12</div><div class="t" style="left:817.1px;top:1213.26px;font-size:18px;line-height:20px;font-weight:normal;color:#111;">0</div><div class="t" style="left:800.3px;top:1213.26px;font-size:18px;line-height:20px;font-weight:normal;color:#111;">:</div><div class="ul" style="left:894.2px;top:1206.3px;width:233.5999999999999px;height:34px"></div><div class="t" style="left:901px;top:1213.26px;font-size:18px;line-height:20px;font-weight:normal;color:#111;">12</div><div class="ul" style="left:1182.8px;top:1206.3px;width:169.5px;height:34px"></div><div class="t" style="left:1190.3px;top:1213.96px;font-size:18px;line-height:20px;font-weight:normal;color:#111;">Dufour Sarah</div><div class="tri" style="left:1334px;top:1221.0px;border-top-color:#808080"></div><div class="ul" style="left:1398px;top:1206.3px;width:233.5px;height:34px"></div><div class="t" style="left:1404px;top:1213.26px;font-size:18px;line-height:20px;font-weight:normal;color:#111;">Haut</div><div class="ul" style="left:1686.4px;top:1206.3px;width:169.5px;height:34px"></div><div class="t" style="left:1693.6px;top:1213.96px;font-size:18px;line-height:20px;font-weight:normal;color:#111;">Sara Nejjari</div><div class="tri" style="left:1837px;top:1221.0px;border-top-color:#808080"></div><div id="bottom"></div>
<svg class="abs" style="left:0;top:1170px" width="300" height="182" viewBox="0 0 300 182">
<circle cx="53.3" cy="145" r="127.3" fill="#283a5b" stroke="#4a6590" stroke-width="5"/>
</svg>
<svg class="abs" style="left:0;top:0" width="200" height="1352"><path d="M84.2 1232.9 H92.5 V1333 H79.6 V1255.1 Q68 1264 54.8 1270 V1257.5 Q72 1250 84.2 1232.9 Z" fill="#fff"/></svg>
</body></html>
